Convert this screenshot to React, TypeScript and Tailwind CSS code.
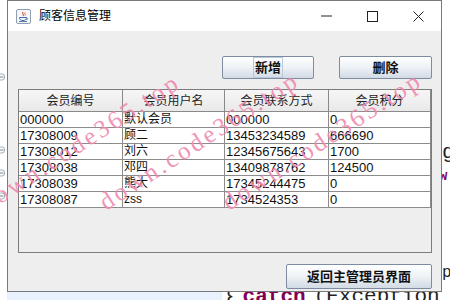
import React from 'react'

const headers = ['会员编号', '会员用户名', '会员联系方式', '会员积分']

const rows = [
  ['000000', '默认会员', '000000', '0'],
  ['17308009', '顾二', '13453234589', '666690'],
  ['17308012', '刘六', '12345675643', '1700'],
  ['17308038', '邓四', '13409878762', '124500'],
  ['17308039', '熊大', '17345244475', '0'],
  ['17308087', 'zss', '1734524353', '0'],
]

// watermark start points (baseline, left end)
const marks = [
  { cls: 'left-[-13px] top-[192px]' },
  { cls: 'left-[106px] top-[190px]' },
  { cls: 'left-[229px] top-[190px]' },
]

function JavaIcon() {
  return (
    <svg width="15" height="15" viewBox="0 0 15 15">
      <rect x="0.5" y="0.5" width="14" height="14" rx="1.5" fill="#f4f6f9" stroke="#8f9db0" />
      <path d="M7 3 C5.5 4.5 8.5 5 7 7" stroke="#d9532b" strokeWidth="1.1" fill="none" />
      <path d="M9 3.5 C8 4.8 10 5 9 6.5" stroke="#d9532b" strokeWidth="0.9" fill="none" />
      <path d="M3.5 8.5 H10.5 C10.5 10.5 9 11.5 7 11.5 C5 11.5 3.5 10.5 3.5 8.5 Z" fill="none" stroke="#4a6fa5" strokeWidth="1" />
      <path d="M10.5 9 C12 9 12 10.5 10.3 10.6" stroke="#4a6fa5" strokeWidth="0.9" fill="none" />
      <path d="M3 12.5 H11" stroke="#4a6fa5" strokeWidth="0.9" />
    </svg>
  )
}

function FoldIcon({ className }: { className: string }) {
  return (
    <svg width="7" height="8" viewBox="0 0 7 8" className={className}>
      <circle cx="1.5" cy="4" r="3.2" fill="#fff" stroke="#9aa3ad" strokeWidth="0.9" />
      <path d="M-0.5 4 H3.5" stroke="#6a7480" strokeWidth="0.9" />
    </svg>
  )
}

function JButton({ children, className, focus }: { children: React.ReactNode; className: string; focus?: boolean }) {
  return (
    <button
      className={`${className} rounded-[2px] border border-[#7d8ca0] bg-linear-to-b from-[#ffffff] via-[#eef2f6] to-[#d2dae4] text-[13px] font-bold text-[#111] flex items-center justify-center`}
    >
      <span className={focus ? 'border border-[#b9c8da] px-[1px] leading-[19px]' : 'leading-[19px]'}>{children}</span>
    </button>
  )
}

export default function App() {
  return (
    <div className="relative w-[450px] h-[300px] overflow-hidden bg-white font-['Liberation_Sans','Noto_Sans_CJK_SC',sans-serif] text-black">
      <div className="flex h-[292px]">
        {/* editor gutter behind the window */}
        <div className="w-[7px] flex flex-col">
          <FoldIcon className="mt-[73px]" />
          <FoldIcon className="mt-[65px]" />
          <FoldIcon className="mt-[15px]" />
          <FoldIcon className="mt-[15px]" />
        </div>

        {/* the dialog */}
        <div className="w-[435px] h-[292px] border border-[#7a7a7a] flex flex-col">
          <div className="h-[30px] bg-white flex items-center">
            <div className="pl-[8px] flex items-center">
              <JavaIcon />
            </div>
            <span className="ml-[8px] text-[12px] leading-none">顾客信息管理</span>
            <div className="ml-auto flex h-full">
              <div className="w-[46px] flex items-center justify-center">
                <svg width="11" height="2" viewBox="0 0 11 2">
                  <path d="M0 1 H11" stroke="#222" strokeWidth="1" />
                </svg>
              </div>
              <div className="w-[46px] flex items-center justify-center">
                <svg width="11" height="11" viewBox="0 0 11 11">
                  <rect x="0.5" y="0.5" width="10" height="10" fill="none" stroke="#222" strokeWidth="1" />
                </svg>
              </div>
              <div className="w-[46px] flex items-center justify-center">
                <svg width="11" height="11" viewBox="0 0 11 11">
                  <path d="M0.5 0.5 L10.5 10.5 M10.5 0.5 L0.5 10.5" stroke="#222" strokeWidth="1" />
                </svg>
              </div>
            </div>
          </div>

          <div className="flex-1 bg-[#eeeeee] flex flex-col">
            <div className="pt-[25px] pr-[9px] flex justify-end gap-[25px]">
              <JButton className="w-[92px] h-[23px]" focus>新增</JButton>
              <JButton className="w-[93px] h-[23px]">删除</JButton>
            </div>

            {/* scroll pane with table */}
            <div className="mt-[10px] ml-[10px] w-[414px] h-[164px] border border-[#7c7c7c] bg-[#eeeeee]">
              <div className="grid grid-cols-[104px_102px_104px_102px]">
                {headers.map((h) => (
                  <div
                    key={h}
                    className="h-[22px] border-r border-b border-[#8a8a8a] bg-linear-to-b from-[#f6f6f6] to-[#e9e9e9] text-[12px] text-[#222] flex items-center justify-center"
                  >
                    {h}
                  </div>
                ))}
                {rows.map((r, i) =>
                  r.map((c, j) => (
                    <div
                      key={`${i}-${j}`}
                      className={`h-[16px] border-r border-b border-[#8c8c8c] bg-white pl-[1px] leading-[15px] whitespace-nowrap overflow-hidden ${
                        j === 1 ? 'text-[12px]' : 'text-[13px]'
                      } text-[#111]`}
                    >
                      {c}
                    </div>
                  ))
                )}
              </div>
            </div>

            <div className="mt-[11px] pr-[9px] flex justify-end">
              <JButton className="w-[146px] h-[25px]">返回主管理员界面</JButton>
            </div>
          </div>
        </div>

        {/* editor code behind the window, right edge */}
        <div className="w-[8px] flex flex-col overflow-hidden font-['Liberation_Mono',monospace] text-[21px] leading-[21px]">
          <span className="mt-[142px] text-[#222]">g</span>
          <span className="mt-[6px] -ml-[3px] font-bold text-[#7f0055] text-[14px] leading-[14px]">w</span>
          <span className="mt-[80px] text-[#222] text-[16px]">p</span>
        </div>
      </div>

      {/* bottom editor line */}
      <div className="flex h-[8px] overflow-hidden">
        <div className="w-[7px] bg-white" />
        <div className="w-[215px] bg-[#e8f2fe]" />
        <div className="flex-1 bg-white whitespace-nowrap font-['Liberation_Mono',monospace] text-[21px] leading-[21px] mt-[-6px]">
          <span className="text-[#222]">{'}'}</span>
          <span className="ml-[8px] font-bold text-[#7f0055]">catch</span>
          <span className="ml-[8px] text-[#222]">(Exception</span>
        </div>
      </div>

      {/* watermarks */}
      {marks.map((m, i) => (
        <div
          key={i}
          className={`pointer-events-none absolute ${m.cls} rotate-[-33deg] origin-[0_21px] font-['Liberation_Serif',serif] text-[25px] leading-none tracking-[3px] text-[#f08ab0] opacity-90 whitespace-nowrap`}
        >
          down.code365.top
        </div>
      ))}
    </div>
  )
}
